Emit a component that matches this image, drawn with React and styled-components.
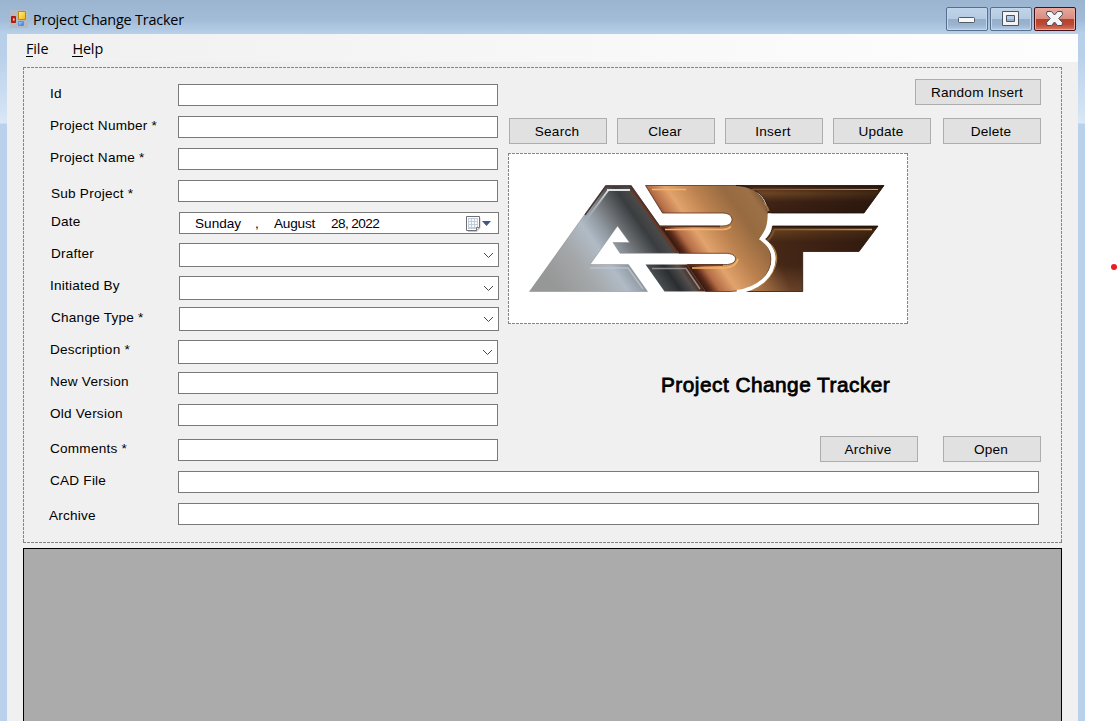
import React from 'react';
import styled, { createGlobalStyle, css } from 'styled-components';

const Global = createGlobalStyle`
  html, body { margin: 0; height: 100%; overflow: hidden; background: #fff; }
  * { box-sizing: border-box; }
`;

const dashes = css`
  background-image:
    repeating-linear-gradient(90deg, #858585 0 3px, transparent 3px 4px),
    repeating-linear-gradient(90deg, #858585 0 3px, transparent 3px 4px),
    repeating-linear-gradient(180deg, #858585 0 3px, transparent 3px 4px),
    repeating-linear-gradient(180deg, #858585 0 3px, transparent 3px 4px);
  background-size: 100% 1px, 100% 1px, 1px 100%, 1px 100%;
  background-position: 0 0, 0 100%, 0 0, 100% 0;
  background-repeat: no-repeat;
`;

const Screen = styled.div`
  position: relative;
  width: 1118px;
  height: 721px;
  overflow: hidden;
  background: #fff;
  color: #000;
  font: 13.6px/16px 'Liberation Sans', Arial, sans-serif;
  letter-spacing: 0.22px;
`;

const Window = styled.div`
  width: 1085px;
  height: 721px;
  padding: 0 7px;
  display: flex;
  flex-direction: column;
  background:
    linear-gradient(#9bb5d1, #a2bcd8 20px, #b7cfe8 33px, #b9d0ea 55px, #d7e5f5 118px, #dce8f6 123px, #b9d1ea 124px);
`;

const TitleBar = styled.header`
  flex: 0 0 34px;
  display: flex;
  align-items: flex-start;
  padding: 7px 2px 0 3px;
`;

const WindowTitle = styled.span`
  flex: 1;
  margin: 4px 0 0 5px;
  font: 14.4px/18px 'Open Sans', 'Noto Sans', sans-serif;
  letter-spacing: -0.2px;
`;

const AppIcon = styled.svg`
  margin-top: 3px;
`;

const CaptionButtons = styled.div`
  display: flex;
  gap: 2px;
`;

const CaptionButton = styled.div`
  width: 42px;
  height: 24px;
  display: flex;
  align-items: center;
  justify-content: center;
  border: 1px solid ${(p) => (p.$close ? '#43101b' : '#586f8d')};
  border-radius: 2px;
  box-shadow: inset 0 0 0 1px ${(p) => (p.$close ? '#e9a99c' : '#c3d7ec')};
  background: ${(p) =>
    p.$close
      ? 'linear-gradient(#e7a99d, #d98d7e 48%, #b8402b 50%, #bd4a34 75%, #d77b65)'
      : 'linear-gradient(#c0d4e9, #b4cbe3 48%, #95afcb 50%, #9ab4d0 75%, #b1cbe6)'};
`;

const Client = styled.main`
  flex: 1;
  min-height: 0;
  display: flex;
  flex-direction: column;
  background: #f0f0f0;
`;

const MenuBar = styled.nav`
  flex: 0 0 28px;
  display: flex;
  gap: 24px;
  padding: 5px 19px 4px;
  font: 14.4px/19px 'Open Sans', 'Noto Sans', sans-serif;
  letter-spacing: -0.1px;
  background: linear-gradient(90deg, #f0f0f0, #fcfcfc 85%, #fdfdfd);
`;

const Mnemonic = styled.span`
  display: inline-block;
  height: 18px;
  border-bottom: 1px solid #000;
`;

const FormPanel = styled.section`
  flex: 0 0 476px;
  width: 1039px;
  margin: 5px 0 0 16px;
  padding: 17px 21px 0 26px;
  ${dashes}
`;

const Upper = styled.div`
  display: flex;
  justify-content: space-between;
`;

const Fields = styled.div`
  width: 450px;
`;

const Row = styled.div`
  display: flex;
  align-items: flex-start;
  height: ${(p) => p.$h}px;
`;

const Label = styled.label`
  width: 129px;
  flex: none;
  padding: ${(p) => p.$top}px 0 0 ${(p) => p.$left}px;
  white-space: nowrap;
`;

const Control = styled.div`
  width: ${(p) => p.$w || 320}px;
  height: ${(p) => (p.$combo ? 24 : 22)}px;
  flex: none;
  margin-left: ${(p) => p.$shift || 0}px;
  display: flex;
  align-items: center;
  justify-content: ${(p) => (p.$combo ? 'flex-end' : 'flex-start')};
  padding-right: 4px;
  border: 1px solid #7a7a7a;
  background: #fff;
`;

const DatePart = styled.span`
  width: ${(p) => p.$w}px;
  padding-top: 1px;
  letter-spacing: ${(p) => p.$track || 0}px;
  white-space: nowrap;
  color: #000010;
  font-size: 13.6px;
`;

const DateLead = styled.span`
  width: 15px;
`;

const CalendarIcon = styled.svg`
  flex: none;
  margin-left: auto;
`;

const Actions = styled.div`
  width: 533px;
  margin-top: -5px;
  display: flex;
  flex-direction: column;
`;

const ButtonRow = styled.div`
  display: flex;
  justify-content: flex-end;
  gap: ${(p) => p.$gap || 10}px;
  margin-top: ${(p) => p.$top || 0}px;
`;

const Button = styled.button`
  width: ${(p) => (p.$wide ? 126 : 98)}px;
  height: 26px;
  margin: 0 0 0 ${(p) => p.$ml || 0}px;
  padding: 1px 2px 0 0;
  border: 1px solid #adadad;
  border-radius: 0;
  background: #e1e1e1;
  color: #000;
  font: inherit;
  letter-spacing: inherit;
`;

const LogoFrame = styled.div`
  width: 400px;
  height: 171px;
  margin-top: 9px;
  background-color: #fff;
  ${dashes}
  svg { display: block; }
`;

const Heading = styled.h1`
  margin: 49px 0 0 153px;
  font-size: 20.8px;
  line-height: 24px;
  font-weight: 400;
  letter-spacing: 0.49px;
  -webkit-text-stroke: 0.8px #000;
  white-space: nowrap;
`;

const DataGrid = styled.section`
  flex: 1;
  width: 1039px;
  margin: 5px 0 0 16px;
  border: 1px solid #000;
  border-bottom: 0;
  background: #ababab;
`;

const Dot = styled.i`
  position: absolute;
  left: 1111px;
  top: 264px;
  width: 6px;
  height: 6px;
  border-radius: 50%;
  background: #ed1c24;
`;

const Chevron = () => (
  <svg width="11" height="7" viewBox="0 0 11 7" fill="none" stroke="#484848" strokeWidth="1">
    <path d="M1 1l4.500 4.500L10 1" />
  </svg>
);

function Logo() {
  const leg = 'M529.5 291.5L605.5 185.5H631L679 253.3H620L613 242.5H629.5L617.5 226L590 264.6H628.5L647.5 291.5Z';
  const foot = 'M645.5 264.6H687L705.5 291.5H664.5Z';
  const b =
    'M645.5 185.5H738C755 186 768 199 768 219C768 227 765 232 759 239C767 244 771 250 771 259C771 278 752 291.5 728 291.5H705.5L687 264.6H725C732 264.6 735.5 262 735.5 258.8C735.5 255.5 732 253.3 725 253.3H679L659.7 226H722C729 226 732 223 732 219.5C732 216 729 213 722 213H662.5Z';
  const fTop = 'M736 185.5H884L864 213H768.3C768 197 755 186 736 185.5Z';
  const fLow = 'M772.5 226H878L859 251.5H802.7V291.5H743C762 288 776.5 275 776.5 259C776.5 250 772 244 765.5 239.3C770 235 772 231 772.5 226Z';
  return (
    <svg width="400" height="171" viewBox="508 153 400 171" fill="none">
      <defs>
        <linearGradient id="steel" gradientUnits="userSpaceOnUse" x1="532" y1="254" x2="631" y2="185.5">
          <stop offset="0" stopColor="#969797" />
          <stop offset=".28" stopColor="#a5a8aa" />
          <stop offset=".48" stopColor="#b0bbc6" />
          <stop offset=".6" stopColor="#929ba4" />
          <stop offset=".73" stopColor="#6d7073" />
          <stop offset=".88" stopColor="#3a3d3f" />
          <stop offset=".97" stopColor="#4b4a4a" />
          <stop offset="1" stopColor="#5b2a16" />
        </linearGradient>
        <linearGradient id="dark" gradientUnits="userSpaceOnUse" x1="650" y1="293" x2="687" y2="267.5">
          <stop offset="0" stopColor="#66696c" />
          <stop offset=".6" stopColor="#2b2e30" />
          <stop offset=".85" stopColor="#54504e" />
          <stop offset="1" stopColor="#4a2416" />
        </linearGradient>
        <linearGradient id="copper" gradientUnits="userSpaceOnUse" x1="631" y1="185.5" x2="729" y2="117.5">
          <stop offset="0" stopColor="#2c140c" />
          <stop offset=".05" stopColor="#5a2a1a" />
          <stop offset=".11" stopColor="#b36b45" />
          <stop offset=".23" stopColor="#e2a36d" />
          <stop offset=".42" stopColor="#bb814f" />
          <stop offset=".62" stopColor="#976a40" />
          <stop offset=".78" stopColor="#9d7147" />
          <stop offset=".9" stopColor="#6e4527" />
          <stop offset="1" stopColor="#4a2917" />
        </linearGradient>
        <linearGradient id="bronze" gradientUnits="userSpaceOnUse" x1="0" y1="185" x2="0" y2="213">
          <stop offset="0" stopColor="#20100a" />
          <stop offset=".12" stopColor="#593318" />
          <stop offset=".3" stopColor="#6b4523" />
          <stop offset=".6" stopColor="#412416" />
          <stop offset="1" stopColor="#3a2014" />
        </linearGradient>
        <linearGradient id="bronzeLow" gradientUnits="userSpaceOnUse" x1="0" y1="226" x2="0" y2="291">
          <stop offset="0" stopColor="#26110a" />
          <stop offset=".06" stopColor="#68411f" />
          <stop offset=".25" stopColor="#482816" />
          <stop offset=".6" stopColor="#492918" />
          <stop offset="1" stopColor="#744a2d" />
        </linearGradient>
        <linearGradient id="shade" gradientUnits="userSpaceOnUse" x1="768" y1="0" x2="884" y2="0">
          <stop offset="0" stopColor="#170b06" stopOpacity="0" />
          <stop offset="1" stopColor="#170b06" stopOpacity=".55" />
        </linearGradient>
        <radialGradient id="corner" gradientUnits="userSpaceOnUse" cx="748" cy="294" r="42">
          <stop offset="0" stopColor="#bd8450" />
          <stop offset="1" stopColor="#bd8450" stopOpacity="0" />
        </radialGradient>
        <linearGradient id="gold" gradientUnits="userSpaceOnUse" x1="770" y1="0" x2="880" y2="0">
          <stop offset="0" stopColor="#80572b" />
          <stop offset=".6" stopColor="#a87a42" />
          <stop offset="1" stopColor="#dba458" />
        </linearGradient>
        <linearGradient id="rim" gradientUnits="userSpaceOnUse" x1="606" y1="188" x2="583" y2="223">
          <stop offset="0" stopColor="#e4e5e6" />
          <stop offset="1" stopColor="#c4ccd6" stopOpacity="0" />
        </linearGradient>
      </defs>
      <path d={leg} fill="url(#steel)" stroke="#85878a" strokeWidth=".5" />
      <path d="M585 215L606 186H631L677 251" stroke="#4a3430" strokeWidth="1.3" />
      <path d="M584 223L608 190.500" stroke="url(#rim)" strokeWidth="2" />
      <path d="M607 190H630" stroke="#e2e3e4" strokeWidth="2" />
      <path d="M632 191L676 252" stroke="#6d3b28" strokeWidth="1.4" />
      <path d="M590 268H628L643 289" stroke="#bfc7ce" strokeWidth="1.6" opacity=".75" />
      <path d={foot} fill="url(#dark)" />
      <path d="M652 268.500H686L700 289" stroke="#9c9a9a" strokeWidth="1.6" opacity=".85" />
      <path d={b} fill="url(#copper)" stroke="#533120" strokeWidth=".8" />
      <path d="M652 189.500H686M665 229.500H723Q728 229.500 731 226.500M692 268H725Q736 267 738 259" stroke="#f4b562" strokeWidth="1.6" />
      <path d="M659 226.500H720M688 265H723" stroke="#5b311d" strokeWidth="1.3" />
      <path d={fTop} fill="url(#bronze)" />
      <path d={fTop} fill="url(#shade)" stroke="#1d0e08" strokeWidth=".8" />
      <path d="M752 189.500H878" stroke="url(#gold)" strokeWidth="1.2" />
      <path d="M764 203Q768 207 769 211" stroke="#a47741" strokeWidth="1.2" />
      <path d={fLow} fill="url(#bronzeLow)" />
      <path d={fLow} fill="url(#corner)" />
      <path d={fLow} fill="url(#shade)" stroke="#2c160d" strokeWidth=".8" />
      <path d="M774 229.500H872" stroke="url(#gold)" strokeWidth="1.4" />
      <path d="M767 241Q772 237 774 230" stroke="#79512e" strokeWidth="2" />
      <path d="M771 245C782 257 775 276 757 288" stroke="#ae7d44" strokeWidth="1.8" />
      <path d="M769.500 213.500C769.500 227 767 231 761.500 238.800C769 244 773.500 250 773.500 259C773.500 276 758 289 737 292" stroke="#fff" strokeWidth="3.8" />
    </svg>
  );
}

const firstRows = [
  { label: 'Id', h: 32, top: 2 },
  { label: 'Project Number *', h: 32, top: 2 },
  { label: 'Project Name *', h: 32, top: 2 },
  { label: 'Sub Project *', h: 32, top: 6, left: 2 },
  { label: 'Date', h: 31, top: 2, left: 2, shift: 1, date: true },
  { label: 'Drafter', h: 33, top: 3, left: 2, shift: 1, combo: true },
  { label: 'Initiated By', h: 31, top: 2, shift: 1, combo: true },
  { label: 'Change Type *', h: 33, top: 3, left: 2, shift: 1, combo: true },
  { label: 'Description *', h: 32, top: 2, combo: true },
  { label: 'New Version', h: 32, top: 2 },
  { label: 'Old Version', h: 35, top: 2 },
  { label: 'Comments *', h: 32, top: 2 },
];

const wideRows = [
  { label: 'CAD File', h: 32, top: 2, w: 861 },
  { label: 'Archive', h: 32, top: 5, left: 0, w: 861 },
];

function Field({ label, h, top, left = 1, shift, combo, date, w }) {
  return (
    <Row $h={h}>
      <Label $top={top} $left={left}>{label}</Label>
      <Control $w={w} $combo={combo} $shift={shift}>
        {combo && <Chevron />}
        {date && (
          <>
            <DateLead />
            <DatePart $w={60}>Sunday</DatePart>
            <DatePart $w={19}>,</DatePart>
            <DatePart $w={57} $track={-0.2}>August</DatePart>
            <DatePart $w={60} $track={-0.6}>28, 2022</DatePart>
            <CalendarIcon width="30" height="17" viewBox="0 0 30 17">
              <path d="M4 16.500H13L16 13V3" fill="none" stroke="#c7c7c7" />
              <path d="M2.500 1.500H15.500V12.500L12.500 15.500H2.500Z" fill="#fff" stroke="#6e6e78" />
              <path d="M4 3h10v9l-2 2H4z" fill="#c3ccd9" />
              <path d="M5 4h2v2H5zm3 0h2v2H8zm3 0h2v2h-2zM5 7h2v2H5zm3 0h2v2H8zm3 0h2v2h-2zM5 10h2v2H5zm3 0h2v2H8zm3 0h2v2h-2z" fill="#f7f9fc" />
              <path d="M15.500 12.500H12.500V15.500" fill="#fff" stroke="#777" />
              <path d="M18 6h9l-4.500 5z" fill="#3f5788" />
            </CalendarIcon>
          </>
        )}
      </Control>
    </Row>
  );
}

export default function App() {
  return (
    <Screen>
      <Global />
      <Window>
        <TitleBar>
          <AppIcon width="18" height="18" viewBox="0 0 18 18">
            <defs>
              <linearGradient id="yellow" x2="1" y2="1"><stop stopColor="#fff0a2" /><stop offset="1" stopColor="#f5b400" /></linearGradient>
              <linearGradient id="blue" x2="1" y2="1"><stop stopColor="#c4dcff" /><stop offset="1" stopColor="#246bdd" /></linearGradient>
            </defs>
            <path d="M0 0h18v18H0z" fill="#b4bac2" />
            <path d="M1.500 6.500h4v6h-4z" fill="#c32010" stroke="#a51c12" />
            <path d="M3 8.500h1.500v2H3z" fill="#ffe5dc" />
            <path d="M8.500 1.500h7v8h-7z" fill="url(#yellow)" stroke="#c08a00" />
            <path d="M8.500 11.500h5v4h-5z" fill="url(#blue)" stroke="#5b8fe0" />
          </AppIcon>
          <WindowTitle>Project Change Tracker</WindowTitle>
          <CaptionButtons>
            <CaptionButton>
              <svg width="18" height="18" viewBox="0 0 18 18"><rect x=".5" y="7.500" width="16" height="5" rx=".8" fill="#f7f7f7" stroke="#515967" /></svg>
            </CaptionButton>
            <CaptionButton>
              <svg width="18" height="18" viewBox="0 0 18 18">
                <path fillRule="evenodd" d="M.5 1.500h16v14H.5zM4.500 5.500v6h8v-6z" fill="#f3f3f3" stroke="#4b5362" />
              </svg>
            </CaptionButton>
            <CaptionButton $close>
              <svg width="20" height="18" viewBox="0 0 20 18">
                <path d="M2 1.500h4.500L9.500 5l3-3.500H17l.5 3L13.700 8.500l3.800 4-.5 3h-4.500L9.500 12l-3 3.500H2l-.5-3 3.800-4-3.800-4z" fill="#f5f5f5" stroke="#494d5b" strokeLinejoin="round" />
              </svg>
            </CaptionButton>
          </CaptionButtons>
        </TitleBar>
        <Client>
          <MenuBar>
            <span><Mnemonic>F</Mnemonic>ile</span>
            <span><Mnemonic>H</Mnemonic>elp</span>
          </MenuBar>
          <FormPanel>
            <Upper>
              <Fields>
                {firstRows.map((r) => <Field key={r.label} {...r} />)}
              </Fields>
              <Actions>
                <ButtonRow><Button $wide>Random Insert</Button></ButtonRow>
                <ButtonRow $top={13}>
                  <Button>Search</Button>
                  <Button>Clear</Button>
                  <Button>Insert</Button>
                  <Button>Update</Button>
                  <Button $ml={2}>Delete</Button>
                </ButtonRow>
                <LogoFrame><Logo /></LogoFrame>
                <Heading>Project Change Tracker</Heading>
                <ButtonRow $top={39} $gap={25}>
                  <Button>Archive</Button>
                  <Button>Open</Button>
                </ButtonRow>
              </Actions>
            </Upper>
            {wideRows.map((r) => <Field key={r.label} {...r} />)}
          </FormPanel>
          <DataGrid />
        </Client>
      </Window>
      <Dot />
    </Screen>
  );
}
